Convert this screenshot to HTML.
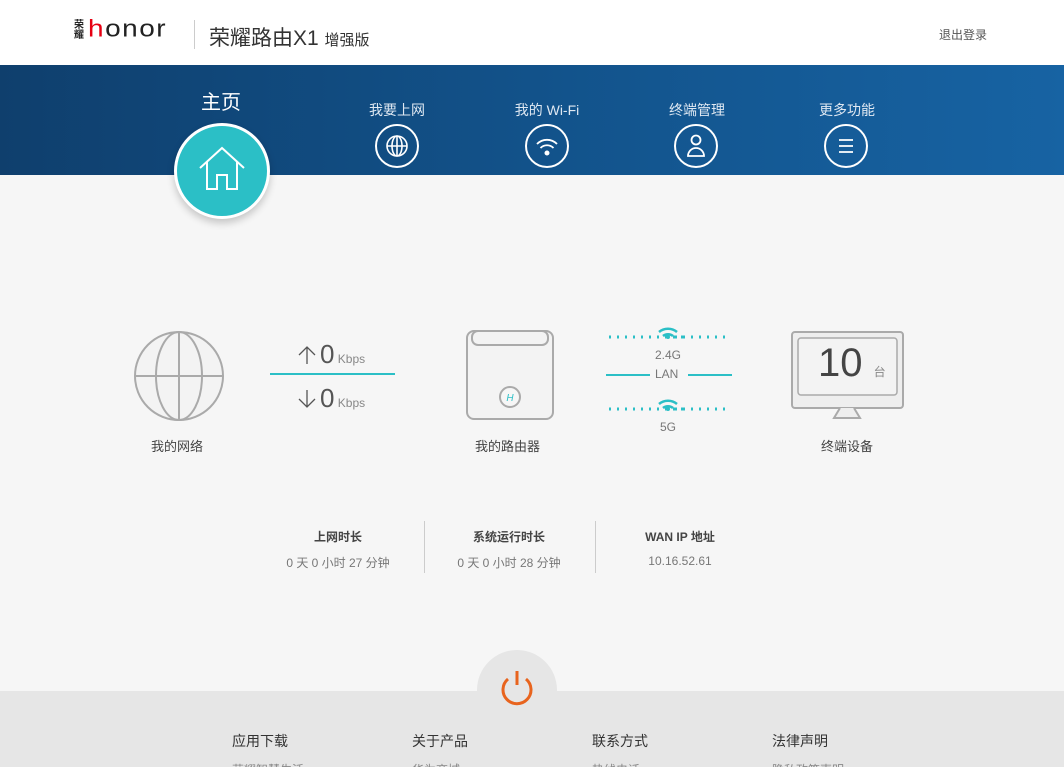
<!DOCTYPE html>
<html style="overflow:hidden;height:767px"><head><meta charset="utf-8"><style>
*{margin:0;padding:0;box-sizing:border-box}
body{width:1064px;height:767px;overflow:hidden;background:#f6f6f6;font-family:"Liberation Sans","Noto Sans CJK SC",sans-serif;position:relative;color:#555}
.a{position:absolute;white-space:nowrap}
#hdr{position:absolute;left:0;top:0;width:1064px;height:65px;background:#fff}
#ban{position:absolute;left:0;top:65px;width:1064px;height:110px;background:linear-gradient(90deg,#0f3f6d 0%,#12528a 50%,#1763a3 100%)}
.nl{color:#dfe8f2;font-size:14px;text-align:center;width:120px}
.nc{position:absolute;width:44px;height:44px;border:2px solid #fff;border-radius:50%}
#foot{position:absolute;left:0;top:691px;width:1064px;height:76px;background:#e6e6e6;overflow:hidden}
.st{font-size:12px;font-weight:bold;color:#444;text-align:center;width:160px}
.sv{font-size:12px;color:#777;text-align:center;width:160px}
.ft{font-size:14px;color:#333}
.fs{font-size:12px;color:#888}
</style></head><body>
<div id="hdr"></div>
<div class="a" style="left:74px;top:21px;font-size:10px;line-height:10px;color:#222;width:12px;font-weight:bold">荣<br>耀</div>
<div class="a" style="left:88px;top:15px;font-size:28px;color:#222;letter-spacing:1.5px;transform:scaleY(0.85);transform-origin:top"><span style="color:#e60012">h</span>onor</div>
<div class="a" style="left:194px;top:20px;width:1px;height:29px;background:#ccc"></div>
<div class="a" style="left:209px;top:22px;font-size:21px;color:#333">荣耀路由X1 <span style="font-size:15px">增强版</span></div>
<div class="a" style="left:939px;top:26px;font-size:12px;color:#555">退出登录</div>
<div id="ban"></div>
<div class="a" style="left:201px;top:86px;font-size:20px;color:#fff">主页</div>
<div class="a" style="left:174px;top:123px;width:96px;height:96px;border-radius:50%;background:#2bbfc6;border:3px solid #fff;box-shadow:0 4px 8px rgba(0,0,0,.2)"></div>
<svg class="a" style="left:198px;top:146px" width="48" height="46" viewBox="0 0 48 46"><path d="M2 22 L24 2 L46 22 M9 16 V43 H19 V29 H29 V43 H39 V16" fill="none" stroke="#fff" stroke-width="2"/></svg>
<div class="a nl" style="left:337px;top:100px">我要上网</div>
<div class="a nl" style="left:487px;top:100px">我的 Wi-Fi</div>
<div class="a nl" style="left:637px;top:100px">终端管理</div>
<div class="a nl" style="left:787px;top:100px">更多功能</div>
<div class="nc" style="left:375px;top:124px"></div>
<div class="nc" style="left:525px;top:124px"></div>
<div class="nc" style="left:674px;top:124px"></div>
<div class="nc" style="left:824px;top:124px"></div>
<svg class="a" style="left:375px;top:124px" width="44" height="44" viewBox="0 0 44 44" fill="none" stroke="#fff" stroke-width="1.6"><circle cx="22" cy="22" r="10"/><ellipse cx="22" cy="22" rx="5" ry="10"/><path d="M22 12V32M12 22H32"/></svg>
<svg class="a" style="left:525px;top:124px" width="44" height="44" viewBox="0 0 44 44" fill="none" stroke="#fff" stroke-width="1.8"><path d="M12 20a14 14 0 0 1 20 0M15.5 24a9 9 0 0 1 13 0"/><circle cx="22" cy="29" r="1.6" fill="#fff"/></svg>
<svg class="a" style="left:674px;top:124px" width="44" height="44" viewBox="0 0 44 44" fill="none" stroke="#fff" stroke-width="1.8"><circle cx="22" cy="16" r="4.5"/><path d="M14 32a8 8 0 0 1 16 0Z"/></svg>
<svg class="a" style="left:824px;top:124px" width="44" height="44" viewBox="0 0 44 44" fill="none" stroke="#fff" stroke-width="1.8"><path d="M15 16H29M15 22H29M15 28H29"/></svg>

<svg class="a" style="left:133px;top:330px" width="92" height="92" viewBox="0 0 92 92" fill="#f3f3f3" stroke="#aaa" stroke-width="2"><circle cx="46" cy="46" r="44"/><ellipse cx="46" cy="46" rx="23" ry="44" fill="none"/><path d="M46 2V90M2 46H90" fill="none"/></svg>
<div class="a" style="left:151px;top:436px;font-size:13px;color:#444">我的网络</div>
<svg class="a" style="left:297px;top:345px" width="20" height="20" viewBox="0 0 20 20" fill="none" stroke="#555" stroke-width="1.3"><path d="M10 19V2M2 10L10 2L18 10"/></svg>
<div class="a" style="left:320px;top:339px;font-size:26px;color:#555">0<span style="font-size:12px;color:#888"> Kbps</span></div>
<div class="a" style="left:270px;top:373px;width:125px;height:2px;background:#2bbfc6"></div>
<svg class="a" style="left:297px;top:389px" width="20" height="20" viewBox="0 0 20 20" fill="none" stroke="#555" stroke-width="1.3"><path d="M10 1V18M2 10L10 18L18 10"/></svg>
<div class="a" style="left:320px;top:383px;font-size:26px;color:#555">0<span style="font-size:12px;color:#888"> Kbps</span></div>
<svg class="a" style="left:465px;top:329px" width="90" height="92" viewBox="0 0 90 92" fill="none" stroke="#aaa" stroke-width="2"><rect x="2" y="2" width="86" height="88" rx="7" fill="#f3f3f3"/><rect x="7" y="2" width="76" height="14" rx="6"/><circle cx="45" cy="68" r="10" fill="#f6f6f6"/><text x="45" y="72" font-size="10" fill="#2bbfc6" stroke="none" text-anchor="middle" font-style="italic">H</text></svg>
<div class="a" style="left:475px;top:436px;font-size:13px;color:#444">我的路由器</div>
<svg class="a" style="left:604px;top:322px" width="130" height="100" viewBox="0 0 130 100"><g fill="#2bbfc6"><path d="M5 15h80" stroke="#2bbfc6" stroke-width="3" stroke-dasharray="2 6"/><path d="M5 87h80" stroke="#2bbfc6" stroke-width="3" stroke-dasharray="2 6"/><rect x="2" y="52" width="44" height="2"/><rect x="84" y="52" width="44" height="2"/></g><g fill="none" stroke="#2bbfc6" stroke-width="2.5"><path d="M55 10a14 14 0 0 1 18 0M59 14a8 8 0 0 1 10 0"/><path d="M55 82a14 14 0 0 1 18 0M59 86a8 8 0 0 1 10 0"/></g><circle cx="64" cy="15" r="2" fill="#2bbfc6"/><circle cx="64" cy="87" r="2" fill="#2bbfc6"/><path d="M71 15h55M71 87h55" stroke="#2bbfc6" stroke-width="3" stroke-dasharray="2 6"/></svg>
<div class="a" style="left:655px;top:348px;font-size:12px;color:#777">2.4G</div>
<div class="a" style="left:655px;top:367px;font-size:12px;color:#777">LAN</div>
<div class="a" style="left:660px;top:420px;font-size:12px;color:#777">5G</div>
<svg class="a" style="left:790px;top:330px" width="115" height="92" viewBox="0 0 115 92" fill="none" stroke="#aaa" stroke-width="2"><rect x="2" y="2" width="111" height="76" rx="3" fill="#eee"/><rect x="8" y="8" width="99" height="57" rx="3" fill="#f3f3f3" stroke-width="1.5"/><path d="M50 78l-6 10h26l-6-10" fill="#eee"/></svg>
<div class="a" style="left:818px;top:341px;font-size:40px;color:#444">10 <span style="font-size:12px;color:#888">台</span></div>
<div class="a" style="left:821px;top:436px;font-size:13px;color:#444">终端设备</div>

<div class="a st" style="left:258px;top:528px">上网时长</div>
<div class="a sv" style="left:258px;top:554px">0 天 0 小时 27 分钟</div>
<div class="a" style="left:424px;top:521px;width:1px;height:52px;background:#ccc"></div>
<div class="a st" style="left:429px;top:528px">系统运行时长</div>
<div class="a sv" style="left:429px;top:554px">0 天 0 小时 28 分钟</div>
<div class="a" style="left:595px;top:521px;width:1px;height:52px;background:#ccc"></div>
<div class="a st" style="left:600px;top:528px">WAN IP 地址</div>
<div class="a sv" style="left:600px;top:554px">10.16.52.61</div>

<div id="foot">
<div class="a ft" style="left:232px;top:40px">应用下载</div>
<div class="a ft" style="left:412px;top:40px">关于产品</div>
<div class="a ft" style="left:592px;top:40px">联系方式</div>
<div class="a ft" style="left:772px;top:40px">法律声明</div>
<div class="a fs" style="left:232px;top:70px">荣耀智慧生活</div>
<div class="a fs" style="left:412px;top:70px">华为商城</div>
<div class="a fs" style="left:592px;top:70px">热线电话</div>
<div class="a fs" style="left:772px;top:70px">隐私政策声明</div>
</div>
<div class="a" style="left:477px;top:650px;width:80px;height:80px;border-radius:50%;background:#e6e6e6"></div>
<svg class="a" style="left:497px;top:668px" width="40" height="44" viewBox="0 0 40 44" fill="none" stroke="#e8641e" stroke-width="3"><path d="M20 3V17"/><path d="M11 11a14 14 0 1 0 18 0"/></svg>
</body></html>
